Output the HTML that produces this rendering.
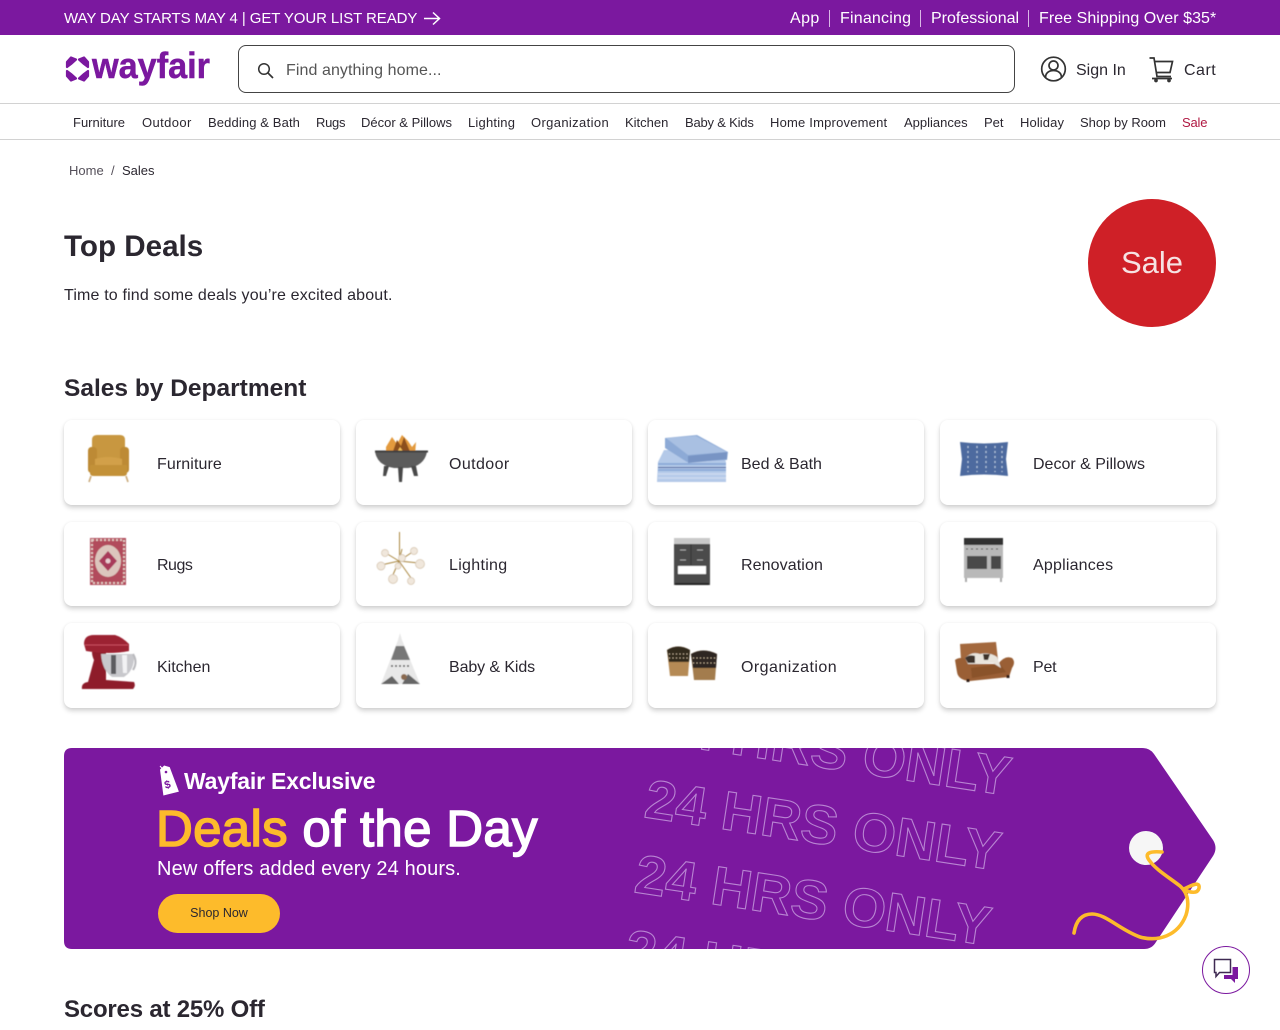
<!DOCTYPE html>
<html lang="en"><head><meta charset="utf-8"><title>Top Deals | Wayfair</title>
<style>
html,body{margin:0;padding:0;background:#fff}
body{position:relative;width:1280px;height:1024px;overflow:hidden;font-family:"Liberation Sans",sans-serif;color:#2b2730}
.t{position:absolute;white-space:nowrap;line-height:20px}
.top{background:#7b189f;position:absolute;left:0;top:0;width:1280px;height:35px}
.w{color:#fff;font-size:16px}
.sep{position:absolute;top:10px;width:1px;height:17px;background:#d9b8e6}
.n{font-size:13px;top:113px;color:#2b2730}
.line{position:absolute;left:0;width:1280px;height:1px;background:#d2d2d2}
.search{position:absolute;left:238px;top:45px;width:775px;height:46px;border:1px solid #444;border-radius:8px}
.card{position:absolute;width:276px;background:#fff;border-radius:8px;box-shadow:0 3px 5px rgba(0,0,0,.17),0 0 3px rgba(0,0,0,.05)}
.l{font-size:16px;color:#2b2730}
svg{position:absolute;overflow:visible}
</style></head><body>

<div class="top"></div>
<a class="t w" style="left:64px;top:9px;font-size:15px;letter-spacing:-.09px">WAY DAY STARTS MAY 4 | GET YOUR LIST READY</a>
<svg style="left:0;top:0" width="1" height="1"><path d="M424 18.500H439M433 12.500L439.500 18.500L433 24.500" fill="none" stroke="#fff" stroke-width="1.500"/></svg>
<a class="t w" style="left:790px;top:9px;letter-spacing:.4px">App</a><i class="sep" style="left:829px"></i>
<a class="t w" style="left:840px;top:9px;letter-spacing:.2px">Financing</a><i class="sep" style="left:920px"></i>
<a class="t w" style="left:931px;top:9px">Professional</a><i class="sep" style="left:1028px"></i>
<a class="t w" style="left:1039px;top:9px;letter-spacing:.05px">Free Shipping Over $35*</a>

<svg style="left:0;top:0" width="1" height="1">
<g fill="#7b189f" stroke="#7b189f" stroke-width="2.200" stroke-linejoin="round">
<path d="M67 62L71 57.500L76 59.500L71 64L67 67Z"/><path d="M88 62L84 57.500L79 59.500L84 64L88 67Z"/>
<path d="M67 76L71 80.500L76 78.500L71 74L67 71Z"/><path d="M88 76L84 80.500L79 78.500L84 74L88 71Z"/>
</g>
<text x="92" y="78" font-family="Liberation Sans" font-weight="700" font-size="36" fill="#7b189f" stroke="#7b189f" stroke-width=".5" textLength="118" lengthAdjust="spacingAndGlyphs">wayfair</text>
</svg>
<div class="search"></div>
<svg style="left:0;top:0" width="1" height="1"><circle cx="264" cy="69" r="5.300" fill="none" stroke="#333" stroke-width="1.500"/><path d="M268 73L273 78" stroke="#333" stroke-width="1.700"/></svg>
<span class="t" style="left:286px;top:61px;font-size:16px;color:#555;letter-spacing:.08px">Find anything home...</span>
<svg style="left:0;top:0" width="1" height="1" fill="none" stroke="#333" stroke-width="1.700">
<circle cx="1053.500" cy="69" r="11.800"/><circle cx="1053.500" cy="65.500" r="4.500"/><path d="M1045.500 77.500C1045.500 73 1049 70.500 1053.500 70.500S1061.500 73 1061.500 77.500"/>
<path d="M1149.500 58H1154L1157 76.500H1171M1155 61.500H1172.500L1170 72.500H1156.500"/><path d="M1152 78.500H1172"/><circle cx="1156" cy="80.500" r="1" /><circle cx="1169" cy="80.500" r="1"/>
</svg>
<a class="t" style="left:1076px;top:61px;font-size:16px">Sign In</a>
<a class="t" style="left:1184px;top:61px;font-size:16px;letter-spacing:.5px">Cart</a>
<div class="line" style="top:103px"></div>

<a class="t n" style="left:73px">Furniture</a>
<a class="t n" style="left:142px;letter-spacing:.4px">Outdoor</a>
<a class="t n" style="left:208px;letter-spacing:.12px">Bedding &amp; Bath</a>
<a class="t n" style="left:316px;letter-spacing:-.3px">Rugs</a>
<a class="t n" style="left:361px">Décor &amp; Pillows</a>
<a class="t n" style="left:468px;letter-spacing:.2px">Lighting</a>
<a class="t n" style="left:531px;letter-spacing:.36px">Organization</a>
<a class="t n" style="left:625px">Kitchen</a>
<a class="t n" style="left:685px;letter-spacing:-.2px">Baby &amp; Kids</a>
<a class="t n" style="left:770px;letter-spacing:.2px">Home Improvement</a>
<a class="t n" style="left:904px">Appliances</a>
<a class="t n" style="left:984px">Pet</a>
<a class="t n" style="left:1020px;letter-spacing:.1px">Holiday</a>
<a class="t n" style="left:1080px">Shop by Room</a>
<a class="t n" style="left:1182px;color:#b01842;letter-spacing:-.2px">Sale</a>
<div class="line" style="top:139px"></div>

<a class="t" style="left:69px;top:161px;font-size:13px;color:#55505a">Home</a>
<span class="t" style="left:111px;top:161px;font-size:13px;color:#55505a">/</span>
<span class="t" style="left:122px;top:161px;font-size:13px">Sales</span>

<h1 class="t" style="left:64px;top:227px;margin:0;font-size:29.600px;line-height:40px;font-weight:700">Top Deals</h1>
<p class="t" style="left:64px;top:286px;margin:0;font-size:16px;letter-spacing:.16px">Time to find some deals you’re excited about.</p>
<div style="position:absolute;left:1088px;top:199px;width:128px;height:128px;border-radius:50%;background:#cf2027"></div>
<span class="t" style="left:1121px;top:243px;font-size:31px;line-height:40px;color:#f6e3e3">Sale</span>
<h2 class="t" style="left:64px;top:369px;margin:0;font-size:24.500px;line-height:40px;font-weight:700">Sales by Department</h2>

<div class="card" style="left:64px;top:420px;height:85px"></div>
<div class="card" style="left:356px;top:420px;height:85px"></div>
<div class="card" style="left:648px;top:420px;height:85px"></div>
<div class="card" style="left:940px;top:420px;height:85px"></div>
<div class="card" style="left:64px;top:522px;height:84px"></div>
<div class="card" style="left:356px;top:522px;height:84px"></div>
<div class="card" style="left:648px;top:522px;height:84px"></div>
<div class="card" style="left:940px;top:522px;height:84px"></div>
<div class="card" style="left:64px;top:623px;height:85px"></div>
<div class="card" style="left:356px;top:623px;height:85px"></div>
<div class="card" style="left:648px;top:623px;height:85px"></div>
<div class="card" style="left:940px;top:623px;height:85px"></div>

<span class="t l" style="left:157px;top:455px;letter-spacing:.1px">Furniture</span>
<span class="t l" style="left:449px;top:455px;letter-spacing:.4px">Outdoor</span>
<span class="t l" style="left:741px;top:455px">Bed &amp; Bath</span>
<span class="t l" style="left:1033px;top:455px">Decor &amp; Pillows</span>
<span class="t l" style="left:157px;top:556px;letter-spacing:-.5px">Rugs</span>
<span class="t l" style="left:449px;top:556px;letter-spacing:.3px">Lighting</span>
<span class="t l" style="left:741px;top:556px;letter-spacing:.1px">Renovation</span>
<span class="t l" style="left:1033px;top:556px;letter-spacing:.2px">Appliances</span>
<span class="t l" style="left:157px;top:658px">Kitchen</span>
<span class="t l" style="left:449px;top:658px;letter-spacing:-.1px">Baby &amp; Kids</span>
<span class="t l" style="left:741px;top:658px;letter-spacing:.45px">Organization</span>
<span class="t l" style="left:1033px;top:658px;letter-spacing:-.2px">Pet</span>

<!-- Products -->
<svg style="left:0;top:0" width="1" height="1">
<defs><filter id="soft" filterUnits="userSpaceOnUse" x="60" y="420" width="1160" height="290"><feGaussianBlur stdDeviation=".45"/></filter></defs>
<g filter="url(#soft)">
<!-- armchair -->
<path d="M91 476L89 482M126 476L128 482" stroke="#c9a878" stroke-width="1.600"/>
<path d="M92 440Q92 435 97 435H120Q125 435 125 440V460H92Z" fill="#c8973f"/>
<rect x="88" y="447" width="9" height="26" rx="3.500" fill="#bd8a34"/><rect x="120" y="447" width="9" height="26" rx="3.500" fill="#bd8a34"/>
<path d="M95 459Q108 455 122 459V466H95Z" fill="#d2a048"/><path d="M90 465H127V473Q127 476 123 476H94Q90 476 90 473Z" fill="#c39138"/>
<!-- fire pit -->
<path d="M386 447L392 437L397 444L402 435L408 441L412 447L416 442L415 455H386Z" fill="#e39a3c"/><path d="M392 454L397 440L401 446L404 437L411 454Z" fill="#8c4f1e"/><path d="M396 454L400 447L405 454Z" fill="#f6c35a"/>
<path d="M375 452H427Q424 466 408 468H394Q378 466 375 452Z" fill="#5b5b5b"/><path d="M375 451.500H428" stroke="#3f3f3f" stroke-width="2"/>
<path d="M398 467H403L402 482H399ZM384 466H389L386 476H383ZM411 466H416L418 476H414Z" fill="#4a4a4a"/>
<!-- sheets -->
<path d="M658 462L664 450H721L726 462V482H657Z" fill="#b4c9e8"/>
<path d="M658 464H726M658 470H726" stroke="#8dabd9" stroke-width="2"/><path d="M658 467.500H726" stroke="#3f5a99" stroke-width="1"/>
<path d="M658 474H726M658 478H726" stroke="#c8d7ee" stroke-width="2"/>
<path d="M665 438L697 435L728 452L727 460L687 462L665 448Z" fill="#8daad6"/><path d="M666 438L696 436L727 452L688 455Z" fill="#a9c0e2"/><path d="M688 456L727 452V459L688 463Z" fill="#7894c4"/>
<!-- pillow -->
<path d="M960 442Q984 445 1008 442L1006 459L1008 476Q984 473 960 476L962 459Z" fill="#4d6b9f"/>
<path d="M968 446V472M977 446V472M986 446V472M995 446V472M1002 446V472" stroke="#b7c7de" stroke-width="1.200" stroke-dasharray="2 3"/>
<!-- rug -->
<rect x="90" y="538" width="36" height="47" fill="#b24c5c"/><rect x="92" y="540" width="32" height="43" fill="none" stroke="#e3c9c4" stroke-width="2" stroke-dasharray="2 2"/>
<ellipse cx="108" cy="561" rx="13" ry="16" fill="#dcc6bd"/><path d="M108 551L117 561L108 571L99 561Z" fill="#a83a5a"/><circle cx="108" cy="561" r="2.500" fill="#e7cfd2"/>
<!-- chandelier -->
<path d="M399.500 532V561M399 561L384 552M399 561L414 551M399 561L381 565M399 561L419 563M399 561L392 577M399 561L411 578M399 561L402 549" stroke="#a9873f" stroke-width="1"/>
<g fill="#f0e7dc" stroke="#d4c3ad" stroke-width=".7"><circle cx="385" cy="553" r="3.500"/><circle cx="414" cy="551" r="3.500"/><circle cx="381" cy="566" r="4"/><circle cx="420" cy="564" r="4.500"/><circle cx="393" cy="579" r="4.500"/><circle cx="411" cy="581" r="3.500"/><circle cx="402" cy="558" r="3.500"/><circle cx="398" cy="566" r="3"/></g>
<!-- vanity -->
<rect x="674" y="538" width="36" height="6" fill="#c9c9c9"/><rect x="674" y="544" width="36" height="41" fill="#4b4b4b"/><rect x="678" y="566" width="28" height="8" fill="#fff"/><rect x="675" y="583" width="34" height="2" fill="#222"/>
<path d="M680 550H686M697 550H703M680 560H686M697 560H703" stroke="#aaa" stroke-width="1"/>
<path d="M691 544V565" stroke="#333"/>
<!-- range -->
<rect x="964" y="538" width="39" height="7" fill="#333"/><rect x="964" y="545" width="39" height="33" fill="#b9b9b9"/>
<path d="M966 549H1001" stroke="#444" stroke-dasharray="2 3"/><rect x="967" y="556" width="20" height="13" fill="#4a4a4a"/><rect x="991" y="556" width="10" height="13" fill="#4a4a4a"/>
<path d="M966 578V582M1001 578V582" stroke="#aaa" stroke-width="2"/>
<!-- mixer -->
<path d="M82 689Q81 683 88 682L94 660Q92 656 92 652H106L106 680L134 682Q136 686 133 689Z" fill="#8e1d2c"/>
<path d="M84 644Q84 635 94 635H115Q122 637 129 644V651Q110 655 86 651Z" fill="#9c2233"/>
<path d="M85 645H128" stroke="#c7505f" stroke-width="1"/>
<path d="M101 654H134Q135 670 124 677H112Q102 670 101 654Z" fill="#c8c8cc"/><path d="M111 655H116V674H111Z" fill="#5c5c60"/><path d="M122 655H127V673H123Z" fill="#f2f2f4"/><path d="M133 654Q138 662 133 670" fill="none" stroke="#b9b9bd" stroke-width="2"/>
<!-- teepee -->
<path d="M400 633L402 640L420 684H381L398 640Z" fill="#e8e8e8"/><path d="M396 646H404L410 660H391Z" fill="#777"/><path d="M381 684L392 676L399 684ZM420 684L408 674L402 684Z" fill="#666"/><path d="M391 666H410" stroke="#444" stroke-width="1.500" stroke-dasharray="2 2"/><circle cx="404" cy="677" r="3" fill="#8a6a50"/>
<!-- baskets -->
<path d="M667 650Q678 643 690 650L688 676H670Z" fill="#b58a55"/><path d="M667 650Q678 643 690 650L689 662H669Z" fill="#33291f"/><path d="M691 654Q703 647 717 654L715 680H694Z" fill="#a37c4e"/><path d="M691 654Q703 647 717 654L716 668H693Z" fill="#2f2620"/>
<g stroke="#d2bda0" stroke-dasharray="1 2.500"><path d="M669 654H689M669 658H689M693 658H716M693 663H716"/></g>
<!-- pet sofa -->
<path d="M960 644L996 642L998 660H961Z" fill="#a3683c"/>
<path d="M955 660Q960 656 968 660L971 664H998Q1005 655 1012 658Q1016 662 1012 668L1009 677L970 681Q958 680 957 672Z" fill="#9a5f34"/>
<path d="M971 668L1000 664L1006 672L972 678Z" fill="#8a5229"/>
<path d="M965 658Q972 651 980 654Q990 652 997 657L1001 668L993 663L975 664L968 664Z" fill="#e8e4dc"/><path d="M965 658Q969 654 975 656L975 663H968ZM983 654H990L988 660H984Z" fill="#3c3029"/>
<path d="M968 679V682M1008 675V678" stroke="#2e1c12" stroke-width="3"/>
</g>
</svg>

<!-- Banner -->
<svg style="left:0;top:0" width="1" height="1">
<defs><clipPath id="tag"><path d="M72 748H1142Q1150 748 1154 754L1213 840Q1218 848 1213 856L1156 942Q1152 949 1144 949H72Q64 949 64 941V756Q64 748 72 748Z"/></clipPath></defs>
<path d="M72 748H1142Q1150 748 1154 754L1213 840Q1218 848 1213 856L1156 942Q1152 949 1144 949H72Q64 949 64 941V756Q64 748 72 748Z" fill="#7b189f"/>
<g clip-path="url(#tag)" font-family="Liberation Sans" font-weight="700" font-size="55" fill="none" stroke="#b884d2" stroke-width="1.100">
<text transform="translate(653,742) rotate(8.600)" textLength="359" lengthAdjust="spacingAndGlyphs">24 HRS ONLY</text>
<text transform="translate(643,817) rotate(8.600)" textLength="359" lengthAdjust="spacingAndGlyphs">24 HRS ONLY</text>
<text transform="translate(633,892) rotate(8.600)" textLength="359" lengthAdjust="spacingAndGlyphs">24 HRS ONLY</text>
<text transform="translate(623,967) rotate(8.600)" textLength="359" lengthAdjust="spacingAndGlyphs">24 HRS ONLY</text>
</g>
<circle cx="1146" cy="848" r="17" fill="#f6f6f6"/>
<path d="M1074 933C1076 920 1082 914 1092 914C1106 914 1120 930 1140 937C1158 942 1178 936 1186 915C1190 902 1187 892 1180 886C1170 878 1156 870 1149 860C1144 853 1150 851 1162 852M1183 889C1190 893 1198 894 1199 888C1200 881 1192 885 1184 889" fill="none" stroke="#fdbb2b" stroke-width="3.600" stroke-linecap="round"/>
<g transform="translate(168,781) rotate(-14)"><path d="M-5 -13L0 -16L5 -13L8 13H-8Z" fill="#fff"/></g>
<path d="M160 766L166 773" stroke="#fff"/><circle cx="166" cy="772" r="1.300" fill="#7b189f"/>
<text x="164" y="788" font-family="Liberation Sans" font-weight="700" font-size="11" fill="#7b189f" transform="rotate(-14 168 783)">$</text>
</svg>
<span class="t" style="left:184px;top:767px;font-size:23px;line-height:28px;font-weight:700;color:#fff;letter-spacing:-.2px">Wayfair Exclusive</span>
<h2 class="t" style="left:156px;top:799px;margin:0;font-size:51px;line-height:60px;font-weight:400;color:#fff;letter-spacing:.3px;-webkit-text-stroke:1.500px #fff"><span style="color:#fdbb2b;-webkit-text-stroke:1.500px #fdbb2b">Deals</span> of the Day</h2>
<span class="t" style="left:157px;top:857px;font-size:20px;line-height:24px;color:#fff;letter-spacing:.13px">New offers added every 24 hours.</span>
<a style="position:absolute;left:158px;top:894px;width:122px;height:39px;border-radius:20px;background:#fdbb2b;text-align:center;line-height:39px;font-size:12.500px;color:#2b2730">Shop Now</a>

<h2 class="t" style="left:64px;top:990px;margin:0;font-size:24px;line-height:40px;font-weight:700;letter-spacing:-.2px">Scores at 25% Off</h2>

<div style="position:absolute;left:1202px;top:946px;width:46px;height:46px;border:1px solid #7b189f;border-radius:50%;background:#fff"></div>
<svg style="left:0;top:0" width="1" height="1">
<path d="M1214.500 959.500H1230.500V972.500H1219.500L1216 976.500V972.500H1214.500Z" fill="none" stroke="#3f2a52" stroke-width="1.500"/>
<path d="M1232.500 967H1238V979H1235V983L1231 979H1224V975H1232.500Z" fill="#7b189f"/>
</svg>
</body></html>
